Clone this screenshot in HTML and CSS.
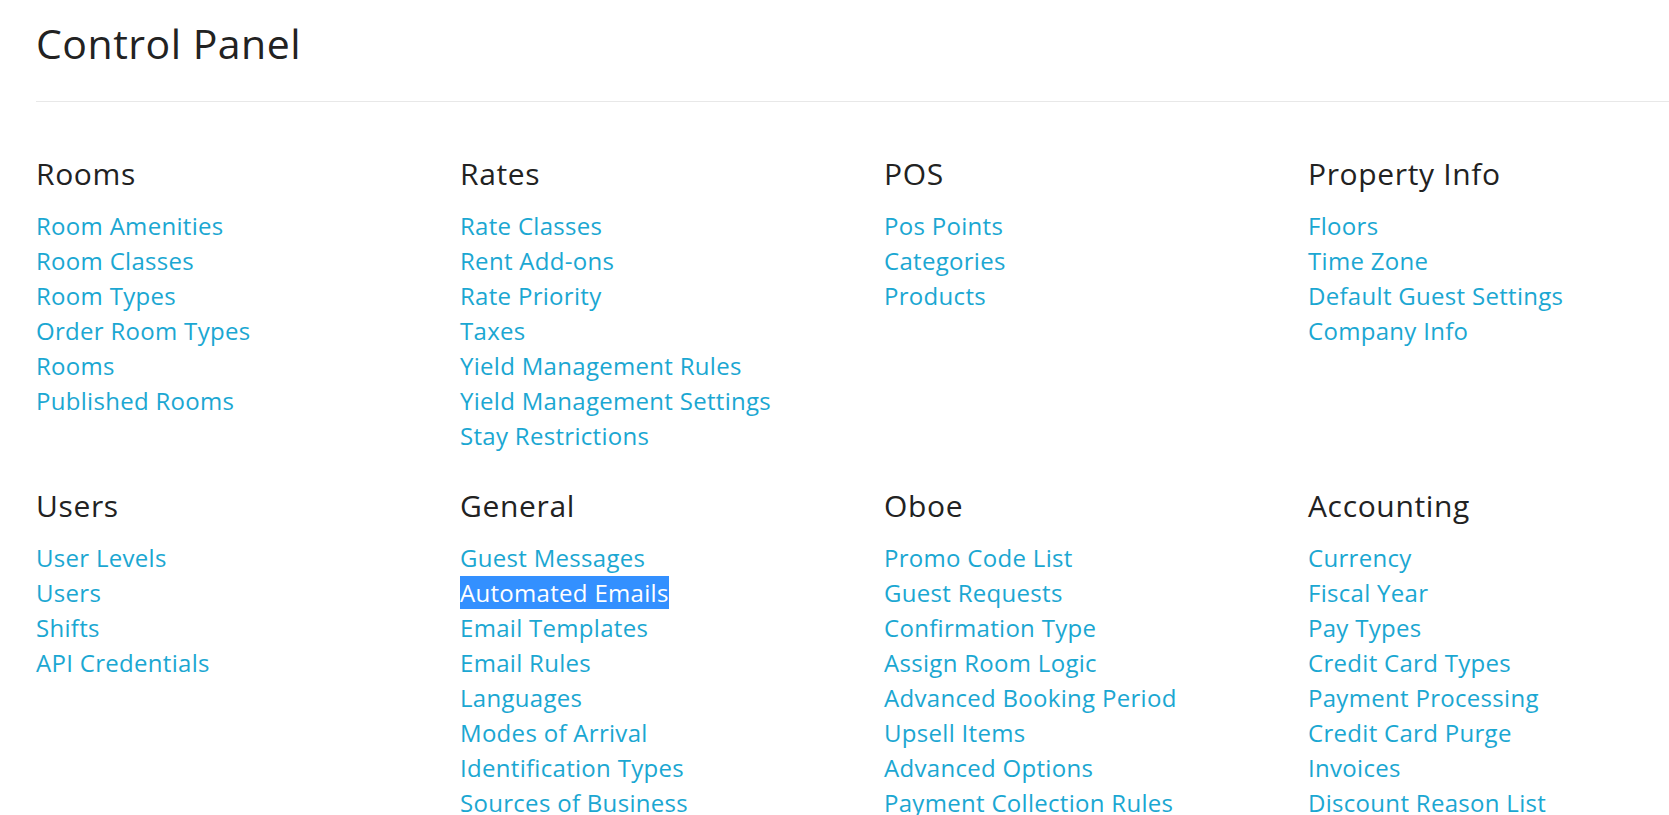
FILE: index.html
```html
<!DOCTYPE html>
<html lang="en">
<head>
<meta charset="utf-8">
<title>Control Panel</title>
<link rel="stylesheet" href="styles.css">
</head>
<body>
<div class="page">
  <h1 class="page-title">Control Panel</h1>
  <hr class="divider">
  <div class="panel-grid">
    <section class="group">
      <h3 class="group-title">Rooms</h3>
      <ul class="links">
        <li><a href="#">Room Amenities</a></li>
        <li><a href="#">Room Classes</a></li>
        <li><a href="#">Room Types</a></li>
        <li><a href="#">Order Room Types</a></li>
        <li><a href="#">Rooms</a></li>
        <li><a href="#">Published Rooms</a></li>
      </ul>
    </section>
    <section class="group">
      <h3 class="group-title">Rates</h3>
      <ul class="links">
        <li><a href="#">Rate Classes</a></li>
        <li><a href="#">Rent Add-ons</a></li>
        <li><a href="#">Rate Priority</a></li>
        <li><a href="#">Taxes</a></li>
        <li><a href="#">Yield Management Rules</a></li>
        <li><a href="#">Yield Management Settings</a></li>
        <li><a href="#">Stay Restrictions</a></li>
      </ul>
    </section>
    <section class="group">
      <h3 class="group-title">POS</h3>
      <ul class="links">
        <li><a href="#">Pos Points</a></li>
        <li><a href="#">Categories</a></li>
        <li><a href="#">Products</a></li>
      </ul>
    </section>
    <section class="group">
      <h3 class="group-title">Property Info</h3>
      <ul class="links">
        <li><a href="#">Floors</a></li>
        <li><a href="#">Time Zone</a></li>
        <li><a href="#">Default Guest Settings</a></li>
        <li><a href="#">Company Info</a></li>
      </ul>
    </section>
    <section class="group">
      <h3 class="group-title">Users</h3>
      <ul class="links">
        <li><a href="#">User Levels</a></li>
        <li><a href="#">Users</a></li>
        <li><a href="#">Shifts</a></li>
        <li><a href="#">API Credentials</a></li>
      </ul>
    </section>
    <section class="group">
      <h3 class="group-title">General</h3>
      <ul class="links">
        <li><a href="#">Guest Messages</a></li>
        <li><a href="#" class="selected">Automated Emails</a></li>
        <li><a href="#">Email Templates</a></li>
        <li><a href="#">Email Rules</a></li>
        <li><a href="#">Languages</a></li>
        <li><a href="#">Modes of Arrival</a></li>
        <li><a href="#">Identification Types</a></li>
        <li><a href="#">Sources of Business</a></li>
      </ul>
    </section>
    <section class="group">
      <h3 class="group-title">Oboe</h3>
      <ul class="links">
        <li><a href="#">Promo Code List</a></li>
        <li><a href="#">Guest Requests</a></li>
        <li><a href="#">Confirmation Type</a></li>
        <li><a href="#">Assign Room Logic</a></li>
        <li><a href="#">Advanced Booking Period</a></li>
        <li><a href="#">Upsell Items</a></li>
        <li><a href="#">Advanced Options</a></li>
        <li><a href="#">Payment Collection Rules</a></li>
      </ul>
    </section>
    <section class="group">
      <h3 class="group-title">Accounting</h3>
      <ul class="links">
        <li><a href="#">Currency</a></li>
        <li><a href="#">Fiscal Year</a></li>
        <li><a href="#">Pay Types</a></li>
        <li><a href="#">Credit Card Types</a></li>
        <li><a href="#">Payment Processing</a></li>
        <li><a href="#">Credit Card Purge</a></li>
        <li><a href="#">Invoices</a></li>
        <li><a href="#">Discount Reason List</a></li>
      </ul>
    </section>
  </div>
</div>
</body>
</html>
```

FILE: styles.css
```css
html, body {
  margin: 0;
  padding: 0;
  background: #fff;
  overflow: hidden;
  height: 100%;
}

body {
  font-family: "Open Sans", "Liberation Sans", sans-serif;
  color: #222;
}

.page {
  padding: 18px 0 0 36px;
}

.page-title {
  margin: 0;
  font-size: 41px;
  line-height: 50px;
  font-weight: 400;
  letter-spacing: 0.5px;
  color: #222;
}

.divider {
  margin: 33px 0 0 0;
  border: 0;
  border-top: 1px solid #e8e8e8;
  height: 0;
}

.panel-grid {
  display: grid;
  grid-template-columns: repeat(4, 424px);
  row-gap: 33.5px;
  margin-top: 51.5px;
}

.group-title {
  margin: 0 0 14px 0;
  font-size: 30px;
  line-height: 40px;
  font-weight: 400;
  letter-spacing: 0.65px;
  color: #222;
}

.links {
  list-style: none;
  margin: 0;
  padding: 0;
}

.links li {
  font-size: 24px;
  line-height: 35px;
  letter-spacing: 0.3px;
  white-space: nowrap;
}

.links a {
  color: #1ba7d2;
  text-decoration: none;
}

.links a.selected {
  background: #3390ff;
  color: #fff;
}
```
